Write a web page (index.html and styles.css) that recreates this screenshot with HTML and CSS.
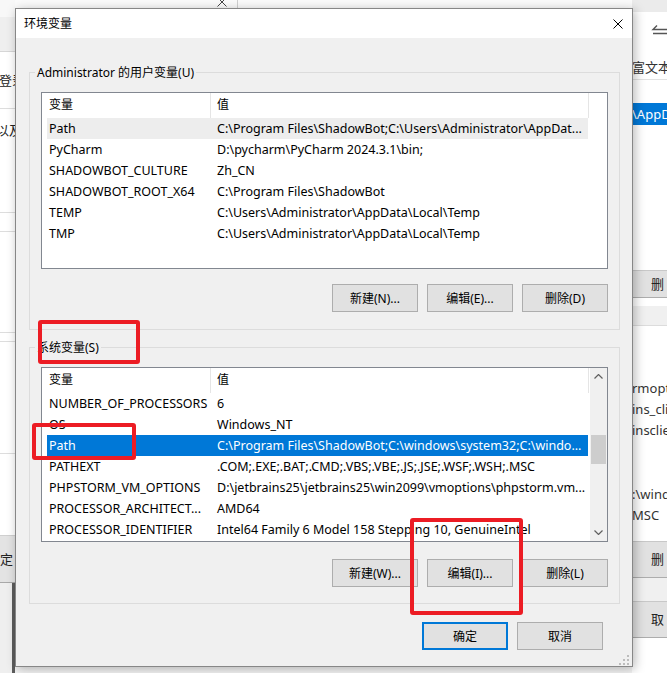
FILE: index.html
```html
<!DOCTYPE html>
<html lang="zh-CN">
<head>
    <meta charset="UTF-8" />
    <meta name="viewport" content="width=device-width, initial-scale=1.0" />
    <title>环境变量</title>
    <link rel="stylesheet" href="styles.css">
</head>
<body>

<!-- background window on the left -->
<div class="bg-left">
    <div class="bl-title"></div>
    <div class="bl-band"></div>
    <div class="bl-cell bl-login"><span>登录</span></div>
    <div class="bl-cell bl-also"><span>以及</span></div>
    <div class="bl-cell bl-gap"></div>
    <div class="bl-cell bl-c1"></div>
    <div class="bl-cell bl-c2"></div>
    <div class="bl-cell bl-c3"></div>
    <div class="bl-spacer"></div>
    <div class="bl-button"><span>确定</span></div>
    <div class="bl-frame"></div>
</div>

<!-- strip of another window above the dialog -->
<div class="bg-top">
    <svg class="bg-top-close" width="10" height="10" viewBox="0 0 10 10">
        <path d="M0.5 0.5 L9.5 9.5 M9.5 0.5 L0.5 9.5" stroke="#444" stroke-width="1" fill="none"/>
    </svg>
    <div class="bg-top-sep"></div>
</div>

<!-- background window on the right -->
<div class="bg-right">
    <div class="br-top"></div>
    <div class="br-head">
        <svg class="br-icon" width="18" height="12" viewBox="0 0 18 12">
            <path d="M6 0.5 L2 4.5 H18 M2 8.5 H18" stroke="#555" stroke-width="1.4" fill="none"/>
        </svg>
        <div class="br-label">富文本</div>
    </div>
    <div class="br-gap"></div>
    <div class="br-select">\AppD</div>
    <div class="br-white1"></div>
    <div class="br-btn">删</div>
    <div class="br-split"></div>
    <div class="br-list">
        <div class="br-line br-l1">rmoptions</div>
        <div class="br-line">ins_client</div>
        <div class="br-line">insclient</div>
        <div class="br-line br-l4">:\windows</div>
        <div class="br-line">MSC</div>
    </div>
    <div class="br-btn br-btn2">删</div>
    <div class="br-split2"></div>
    <div class="br-btn br-btn3">取</div>
</div>

<!-- the dialog -->
<div class="dialog">
    <div class="titlebar">
        <span class="title">环境变量</span>
        <svg class="close" width="10" height="10" viewBox="0 0 10 10">
            <path d="M0.5 0.5 L9.5 9.5 M9.5 0.5 L0.5 9.5" stroke="#000" stroke-width="1" fill="none"/>
        </svg>
    </div>

    <div class="dlg-body">
        <fieldset class="group">
            <legend>Administrator 的用户变量(U)</legend>
            <div class="list list-user">
                <div class="list-main">
                    <div class="list-head">
                        <div class="head-name">变量</div>
                        <div class="head-val">值</div>
                    </div>
                    <div class="row row-idle">
                        <div class="cell-name">Path</div>
                        <div class="cell-val">C:\Program Files\ShadowBot;C:\Users\Administrator\AppDat...</div>
                    </div>
                    <div class="row">
                        <div class="cell-name">PyCharm</div>
                        <div class="cell-val">D:\pycharm\PyCharm 2024.3.1\bin;</div>
                    </div>
                    <div class="row">
                        <div class="cell-name">SHADOWBOT_CULTURE</div>
                        <div class="cell-val">Zh_CN</div>
                    </div>
                    <div class="row">
                        <div class="cell-name">SHADOWBOT_ROOT_X64</div>
                        <div class="cell-val">C:\Program Files\ShadowBot</div>
                    </div>
                    <div class="row">
                        <div class="cell-name">TEMP</div>
                        <div class="cell-val">C:\Users\Administrator\AppData\Local\Temp</div>
                    </div>
                    <div class="row">
                        <div class="cell-name">TMP</div>
                        <div class="cell-val">C:\Users\Administrator\AppData\Local\Temp</div>
                    </div>
                </div>
            </div>
            <div class="btn-row">
                <button class="btn">新建(N)...</button>
                <button class="btn">编辑(E)...</button>
                <button class="btn">删除(D)</button>
            </div>
        </fieldset>

        <fieldset class="group group-sys">
            <legend>系统变量(S)</legend>
            <div class="list list-sys">
                <div class="list-main">
                    <div class="list-head">
                        <div class="head-name">变量</div>
                        <div class="head-val">值</div>
                    </div>
                    <div class="row">
                        <div class="cell-name">NUMBER_OF_PROCESSORS</div>
                        <div class="cell-val">6</div>
                    </div>
                    <div class="row">
                        <div class="cell-name">OS</div>
                        <div class="cell-val">Windows_NT</div>
                    </div>
                    <div class="row row-active">
                        <div class="cell-name">Path</div>
                        <div class="cell-val">C:\Program Files\ShadowBot;C:\windows\system32;C:\windo...</div>
                    </div>
                    <div class="row">
                        <div class="cell-name">PATHEXT</div>
                        <div class="cell-val">.COM;.EXE;.BAT;.CMD;.VBS;.VBE;.JS;.JSE;.WSF;.WSH;.MSC</div>
                    </div>
                    <div class="row">
                        <div class="cell-name">PHPSTORM_VM_OPTIONS</div>
                        <div class="cell-val">D:\jetbrains25\jetbrains25\win2099\vmoptions\phpstorm.vm...</div>
                    </div>
                    <div class="row">
                        <div class="cell-name">PROCESSOR_ARCHITECT...</div>
                        <div class="cell-val">AMD64</div>
                    </div>
                    <div class="row">
                        <div class="cell-name">PROCESSOR_IDENTIFIER</div>
                        <div class="cell-val">Intel64 Family 6 Model 158 Stepping 10, GenuineIntel</div>
                    </div>
                    <div class="row">
                        <div class="cell-name">PROCESSOR_LEVEL</div>
                        <div class="cell-val">6</div>
                    </div>
                </div>
                <div class="scrollbar">
                    <div class="sb-arrow">
                        <svg width="9" height="5" viewBox="0 0 9 5"><path d="M0.5 4.5 L4.5 0.5 L8.5 4.5" stroke="#606060" stroke-width="1.2" fill="none"/></svg>
                    </div>
                    <div class="sb-track"><div class="sb-thumb"></div></div>
                    <div class="sb-arrow">
                        <svg width="9" height="5" viewBox="0 0 9 5"><path d="M0.5 0.5 L4.5 4.5 L8.5 0.5" stroke="#606060" stroke-width="1.2" fill="none"/></svg>
                    </div>
                </div>
            </div>
            <div class="btn-row btn-row-sys">
                <button class="btn">新建(W)...</button>
                <button class="btn">编辑(I)...</button>
                <button class="btn">删除(L)</button>
            </div>
        </fieldset>

        <div class="dlg-actions">
            <button class="btn btn-default">确定</button>
            <button class="btn">取消</button>
        </div>

        <svg class="grip" width="10" height="10" viewBox="0 0 10 10">
            <rect x="8" y="0" width="2" height="2" fill="#bcbcbc"/>
            <rect x="4" y="4" width="2" height="2" fill="#bcbcbc"/>
            <rect x="8" y="4" width="2" height="2" fill="#bcbcbc"/>
            <rect x="0" y="8" width="2" height="2" fill="#bcbcbc"/>
            <rect x="4" y="8" width="2" height="2" fill="#bcbcbc"/>
            <rect x="8" y="8" width="2" height="2" fill="#bcbcbc"/>
        </svg>
    </div>
</div>

<!-- red annotation boxes -->
<div class="mark mark-sys"></div>
<div class="mark mark-path"></div>
<div class="mark mark-edit"></div>

</body>
</html>
```

FILE: styles.css
```css
/* General */
* {
    box-sizing: border-box;
}

html, body {
    margin: 0;
    padding: 0;
}

body {
    width: 667px;
    height: 673px;
    overflow: hidden;
    position: relative;
    background: #f4f4f4;
    font-family: "Noto Sans", "Noto Sans CJK SC", sans-serif;
    font-size: 12px;
    color: #000;
}

/* Left background window */
.bg-left {
    position: absolute;
    left: 0;
    top: 0;
    width: 15px;
    height: 673px;
    background: #fff;
    overflow: hidden;
    display: flex;
    flex-direction: column;
    color: #222;
    font-size: 13px;
}

.bl-title {
    height: 17px;
    background: #f8f8f8;
}

.bl-band {
    height: 35px;
    background: #efefef;
    border-bottom: 1px solid #d6d6d6;
}

.bl-cell {
    border-bottom: 1px solid #dddddd;
    white-space: nowrap;
}

.bl-login {
    height: 57px;
    line-height: 56px;
}

.bl-login span {
    margin-left: -1px;
}

.bl-also {
    height: 104px;
    padding-top: 13px;
    line-height: 17px;
}

.bl-also span {
    margin-left: -4px;
}

.bl-gap {
    height: 19px;
}

.bl-c1 {
    height: 101px;
}

.bl-c2 {
    height: 9px;
}

.bl-c3 {
    height: 112px;
}

.bl-spacer {
    height: 81px;
}

.bl-button {
    height: 48px;
    background: #e3e3e3;
    border-top: 1px solid #cfcfcf;
    border-bottom: 1px solid #a9a9a9;
    line-height: 46px;
    white-space: nowrap;
}

.bl-button span {
    margin-left: -13px;
}

.bl-frame {
    flex: 1;
    background: #efefef;
    border-right: 3px solid #5d5d5d;
}

/* Top strip */
.bg-top {
    position: absolute;
    left: 15px;
    top: 0;
    width: 617px;
    height: 8px;
    background: #fbfbfb;
    overflow: hidden;
}

.bg-top-close {
    position: absolute;
    left: 202px;
    top: -3px;
}

.bg-top-sep {
    position: absolute;
    left: 222px;
    top: 0;
    width: 1px;
    height: 8px;
    background: #d0d0d0;
}

/* Right background window */
.bg-right {
    position: absolute;
    left: 632px;
    top: 0;
    width: 35px;
    height: 673px;
    background: #fff;
    overflow: hidden;
    display: flex;
    flex-direction: column;
    color: #333;
    font-size: 13px;
    white-space: nowrap;
}

.br-top {
    height: 12px;
    background: #ebebeb;
}

.br-head {
    height: 68px;
    border-bottom: 1px solid #e2e2e2;
    padding-top: 13px;
}

.br-icon {
    display: block;
    margin-left: 19px;
}

.br-label {
    margin-top: 22px;
    line-height: 17px;
}

.br-gap {
    height: 23px;
}

.br-select {
    height: 22px;
    line-height: 22px;
    background: #0078d7;
    color: #fff;
}

.br-white1 {
    height: 145px;
}

.br-btn {
    height: 28px;
    line-height: 26px;
    background: #e1e1e1;
    border-top: 1px solid #c8c8c8;
    border-bottom: 1px solid #adadad;
    padding-left: 19px;
    color: #222;
}

.br-split {
    height: 28px;
    background: #f0f0f0;
    border-top: 8px solid #fff;
    border-bottom: 1px solid #dcdcdc;
}

.br-list {
    height: 215px;
    padding-top: 52px;
}

.br-line {
    line-height: 21px;
}

.br-l4 {
    margin-top: 43px;
}

.br-btn2 {
    height: 37px;
    line-height: 35px;
}

.br-split2 {
    height: 23px;
    background: #f0f0f0;
}

.br-btn3 {
    height: 37px;
    line-height: 35px;
}

/* Dialog */
.dialog {
    position: absolute;
    left: 15px;
    top: 8px;
    width: 618px;
    height: 659px;
    border: 1px solid #878787;
    background: #f0f0f0;
    box-shadow: 2px 2px 10px rgba(0, 0, 0, 0.28);
    display: flex;
    flex-direction: column;
}

.titlebar {
    height: 29px;
    background: #fff;
    display: flex;
    align-items: center;
    justify-content: space-between;
    padding: 0 9px 0 8px;
}

.title {
    line-height: 29px;
}

.close {
    display: block;
}

.dlg-body {
    flex: 1;
    position: relative;
    padding: 26px 12px 0 13px;
}

/* Group boxes */
.group {
    margin: 0;
    padding: 11px 11px 17px;
    border: 1px solid #dcdcdc;
    min-width: 0;
}

.group legend {
    padding: 0 2px;
    margin-left: -6px;
    line-height: 17px;
}

.group-sys {
    margin-top: 9px;
    padding-bottom: 16px;
}

/* List views */
.list {
    border: 1px solid #828790;
    background: #fff;
    display: flex;
    overflow: hidden;
}

.list-user {
    height: 177px;
}

.list-sys {
    height: 175px;
}

.list-main {
    flex: 1;
    overflow: hidden;
}

.list-head {
    display: flex;
    height: 25px;
    line-height: 24px;
}

.head-name {
    width: 169px;
    padding-left: 7px;
    border-right: 1px solid #e5e5e5;
}

.head-val {
    width: 378px;
    padding-left: 6px;
    border-right: 1px solid #e5e5e5;
}

.row {
    display: flex;
    width: 541px;
    height: 21px;
    line-height: 21px;
    margin-left: 5px;
    white-space: nowrap;
    font-size: 12.5px;
}

.cell-name {
    width: 163px;
    padding-left: 2px;
    overflow: hidden;
}

.cell-val {
    width: 378px;
    padding-left: 7px;
    overflow: hidden;
}

.row-idle {
    background: #ededed;
}

.row-active {
    background: #0078d7;
    color: #fff;
}

/* Scrollbar */
.scrollbar {
    width: 17px;
    background: #f0f0f0;
    display: flex;
    flex-direction: column;
}

.sb-arrow {
    height: 17px;
    display: flex;
    align-items: center;
    justify-content: center;
}

.sb-arrow svg {
    display: block;
}

.sb-track {
    flex: 1;
}

.sb-thumb {
    margin: 50px 1px 0;
    height: 29px;
    background: #cdcdcd;
}

/* Buttons */
.btn {
    width: 86px;
    height: 28px;
    padding: 0;
    border: 1px solid #adadad;
    background: #e1e1e1;
    font-family: inherit;
    font-size: 12px;
    color: #000;
}

.btn-row {
    display: flex;
    justify-content: flex-end;
    gap: 9px;
    margin-top: 15px;
}

.btn-row-sys {
    margin-top: 17px;
}

.dlg-actions {
    display: flex;
    justify-content: flex-end;
    gap: 9px;
    margin-top: 18px;
    padding-right: 17px;
}

.btn-default {
    border: 2px solid #0078d7;
}

.grip {
    position: absolute;
    right: 3px;
    bottom: 1px;
}

/* Red annotation boxes */
.mark {
    position: absolute;
    border: 4px solid #ec1c24;
    border-radius: 3px;
}

.mark-sys {
    left: 38px;
    top: 320px;
    width: 102px;
    height: 44px;
}

.mark-path {
    left: 32px;
    top: 423px;
    width: 104px;
    height: 37px;
}

.mark-edit {
    left: 410px;
    top: 518px;
    width: 113px;
    height: 97px;
}
```
